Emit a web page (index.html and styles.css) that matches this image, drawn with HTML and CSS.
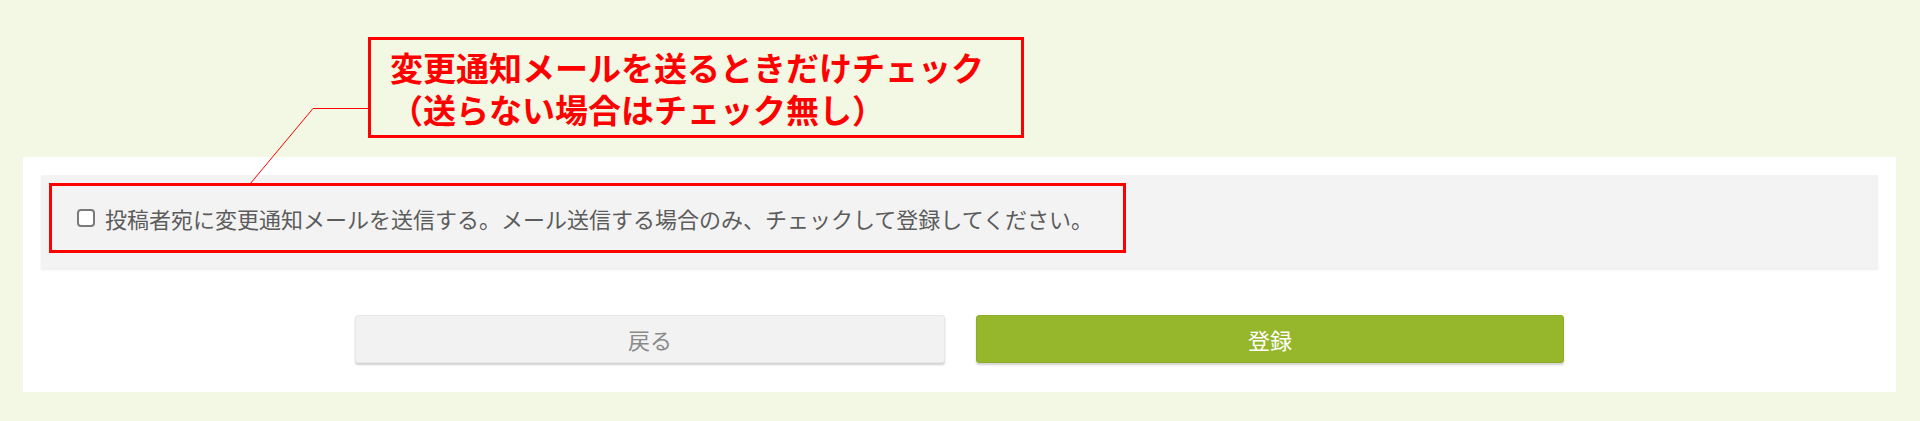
FILE: index.html
```html
<!DOCTYPE html>
<html lang="ja">
<head>
<meta charset="utf-8">
<title>変更通知</title>
<link rel="stylesheet" href="styles.css">
</head>
<body>
<div class="page">
  <div class="note-area">
    <div class="callout">
      <div class="callout-line">変更通知メールを送るときだけチェック</div>
      <div class="callout-line">（送らない場合はチェック無し）</div>
    </div>
  </div>
  <svg class="leader" width="1920" height="421" viewBox="0 0 1920 421" aria-hidden="true">
    <polyline points="369,108.5 313,108.5 250,184" fill="none" stroke="#ff0000" stroke-width="1"/>
  </svg>
  <div class="panel">
    <div class="options">
      <label class="highlight">
        <input type="checkbox" class="check">
        <span class="label-text">投稿者宛に変更通知メールを送信する。メール送信する場合のみ、チェックして登録してください。</span>
      </label>
    </div>
    <div class="actions">
      <button type="button" class="btn btn-back">戻る</button>
      <button type="button" class="btn btn-submit">登録</button>
    </div>
  </div>
</div>
</body>
</html>
```

FILE: styles.css
```css
html, body {
  margin: 0;
  padding: 0;
}
body {
  background: #f3f8e5;
  font-family: "Noto Sans CJK JP", "Noto Sans", sans-serif;
  width: 1920px;
  height: 421px;
  overflow: hidden;
}
.page {
  position: relative;
  width: 1920px;
  height: 421px;
}
.note-area {
  height: 157px;
  box-sizing: border-box;
  padding: 37px 0 0 368px;
}
.callout {
  box-sizing: border-box;
  width: 656px;
  height: 101px;
  border: 3px solid #ff0000;
  padding: 6px 0 0 19px;
  color: #ff0000;
  font-weight: 700;
  font-size: 33px;
  white-space: nowrap;
}
.callout-line {
  height: 42px;
  line-height: 42px;
}
.leader {
  position: absolute;
  left: 0;
  top: 0;
  pointer-events: none;
  z-index: 2;
}
.panel {
  box-sizing: border-box;
  margin: 0 24px 0 23px;
  height: 235px;
  background: #ffffff;
  padding: 18px 18px 0 18px;
}
.options {
  box-sizing: border-box;
  height: 93px;
  background: #f3f3f3;
  padding: 8px;
  box-shadow: 0 2px 2px rgba(0, 0, 0, 0.07);
}
.highlight {
  box-sizing: border-box;
  width: 1077px;
  height: 70px;
  border: 3px solid #ff0000;
  display: flex;
  align-items: center;
  padding-left: 25px;
}
.check {
  appearance: none;
  -webkit-appearance: none;
  box-sizing: border-box;
  width: 18px;
  height: 18px;
  margin: 0 10px 0 0;
  border: 2px solid #7a7a7a;
  border-radius: 4px;
  background: #ffffff;
  flex: none;
}
.label-text {
  font-size: 22px;
  color: #5c5c5c;
  white-space: nowrap;
}
.actions {
  margin-top: 47px;
  display: flex;
  justify-content: center;
  gap: 31px;
}
.btn {
  box-sizing: border-box;
  height: 48px;
  border-radius: 3px;
  font-family: "Noto Sans CJK JP", "Noto Sans", sans-serif;
  font-size: 22px;
  line-height: 1;
  padding: 0;
  cursor: pointer;
}
.btn-back {
  width: 590px;
  background: #f2f2f2;
  color: #8a8a8a;
  border: 1px solid #e8e8e8;
  box-shadow: 0 2px 2px rgba(0, 0, 0, 0.18);
}
.btn-submit {
  width: 588px;
  background: #96b72b;
  color: #ffffff;
  border: 1px solid #8fae27;
  box-shadow: 0 2px 2px rgba(0, 0, 0, 0.18);
}
```
